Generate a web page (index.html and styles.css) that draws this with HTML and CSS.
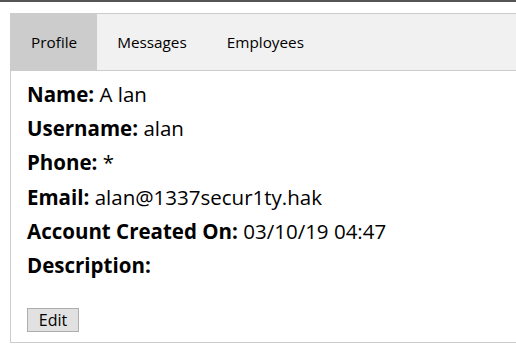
FILE: index.html
```html
<!DOCTYPE html>
<html lang="en">
<head>
    <meta charset="UTF-8">
    <meta name="viewport" content="width=device-width, initial-scale=1.0">
    <title>Profile</title>
    <link rel="stylesheet" href="styles.css">
</head>
<body>
    <div class="top-bar"></div>
    <div class="page">
        <div class="panel">
            <div class="tab">
                <button class="tablinks active">Profile</button>
                <button class="tablinks">Messages</button>
                <button class="tablinks">Employees</button>
            </div>
            <div class="tabcontent">
                <p class="row"><b>Name:</b> A lan</p>
                <p class="row"><b>Username:</b> alan</p>
                <p class="row"><b>Phone:</b> *</p>
                <p class="row"><b>Email:</b> alan@1337secur1ty.hak</p>
                <p class="row"><b>Account Created On:</b> 03/10/19 04:47</p>
                <p class="row"><b>Description:</b> </p>
                <button class="edit-btn">Edit</button>
            </div>
        </div>
    </div>
</body>
</html>
```
FILE: styles.css
```css
body {
    margin: 0;
    font-family: "Open Sans", "Noto Sans", sans-serif;
    background: #fff;
    color: #000;
    overflow: hidden;
}
.top-bar {
    height: 2px;
    background: #555;
}
.page {
    padding: 11px 0 0 10px;
    overflow: hidden;
}
.panel {
    width: 520px;
    border: 1px solid #ccc;
}
.tab {
    display: flex;
    background-color: #f1f1f1;
    border-bottom: 1px solid #ccc;
}
.tab button {
    background: inherit;
    border: none;
    outline: none;
    height: 56px;
    padding: 0 20px;
    font-family: inherit;
    font-size: 15.3px;
    color: #000;
    cursor: pointer;
}
.tab button.active {
    background-color: #ccc;
}
.tabcontent {
    padding: 6px 16px 9px;
    height: 256px;
}
.row {
    margin: 0;
    font-size: 20.5px;
    line-height: 34.2px;
}
.edit-btn {
    margin-top: 26px;
    width: 52px;
    height: 24px;
    padding: 0;
    font-family: inherit;
    font-size: 16px;
    background: #e1e1e1;
    border: 1px solid #adadad;
    border-radius: 0;
    color: #000;
}
```
